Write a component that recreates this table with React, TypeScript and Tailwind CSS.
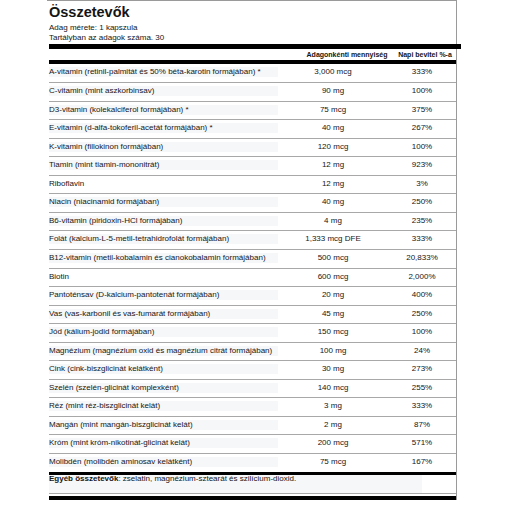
import React from "react";

const rows: [string, string, string][] = [
  ["A-vitamin (retinil-palmitát és 50% béta-karotin formájában) *", "3,000 mcg", "333%"],
  ["C-vitamin (mint aszkorbinsav)", "90 mg", "100%"],
  ["D3-vitamin (kolekalciferol formájában) *", "75 mcg", "375%"],
  ["E-vitamin (d-alfa-tokoferil-acetát formájában) *", "40 mg", "267%"],
  ["K-vitamin (fillokinon formájában)", "120 mcg", "100%"],
  ["Tiamin (mint tiamin-mononitrát)", "12 mg", "923%"],
  ["Riboflavin", "12 mg", "3%"],
  ["Niacin (niacinamid formájában)", "40 mg", "250%"],
  ["B6-vitamin (piridoxin-HCl formájában)", "4 mg", "235%"],
  ["Folát (kalcium-L-5-metil-tetrahidrofolát formájában)", "1,333 mcg DFE", "333%"],
  ["B12-vitamin (metil-kobalamin és cianokobalamin formájában)", "500 mcg", "20,833%"],
  ["Biotin", "600 mcg", "2,000%"],
  ["Pantoténsav (D-kalcium-pantotenát formájában)", "20 mg", "400%"],
  ["Vas (vas-karbonil és vas-fumarát formájában)", "45 mg", "250%"],
  ["Jód (kálium-jodid formájában)", "150 mcg", "100%"],
  ["Magnézium (magnézium oxid és magnézium citrát formájában)", "100 mg", "24%"],
  ["Cink (cink-biszglicinát kelátként)", "30 mg", "273%"],
  ["Szelén (szelén-glicinát komplexként)", "140 mcg", "255%"],
  ["Réz (mint réz-biszglicinát kelát)", "3 mg", "333%"],
  ["Mangán (mint mangán-biszglicinát kelát)", "2 mg", "87%"],
  ["Króm (mint króm-nikotinát-glicinát kelát)", "200 mcg", "571%"],
  ["Molibdén (molibdén aminosav kelátként)", "75 mcg", "167%"],
];

export default function App() {
  return (
    <div className="w-[510px] h-[510px] bg-white text-[#151515] font-['Liberation_Sans',Arial,sans-serif] overflow-hidden">
      <div className="ml-[47px] w-[410px] border-t border-r border-[#9a9a9a] pl-[2px]">
        <div className="text-[14.5px] font-bold leading-[17px] pt-[3px]">Összetevők</div>
        <div className="text-[8px] leading-[9.5px] mt-[2px]">Adag mérete: 1 kapszula</div>
        <div className="text-[8px] leading-[9.5px]">Tartályban az adagok száma. 30</div>
        <div className="h-[5px] bg-black mt-[2px] -mr-[5px]" />
        <div className="flex h-[11px] items-center text-[7px] font-bold leading-[8px]">
          <div className="w-[229px]" />
          <div className="w-[110px] pl-[28px] text-center">Adagonkénti mennyiség</div>
          <div className="flex-1 pl-[6px] text-center">Napi bevitel %-a</div>
        </div>
        <div className="h-[3.5px] bg-black" />
        {rows.map(([label, amount, pct], i) => (
          <div
            key={i}
            className={`flex h-[18.55px] text-[8px] leading-[10px] ${i === 0 ? "" : "border-t border-[#a8a8a8]"}`}
          >
            <div className="w-[229px]">
              <div className={`mt-[3px] h-[10px] whitespace-nowrap ${label === "Riboflavin" || label === "Biotin" ? "" : "bg-[#f6f7f9]"}`}>{label}</div>
            </div>
            <div className="w-[110px] text-center pt-[3px]">{amount}</div>
            <div className="flex-1 text-center pt-[3px]">{pct}</div>
          </div>
        ))}
        <div className="h-[3px] bg-black" />
        <div className="h-[18px]">
          <div className="w-[373px] h-[18px] bg-[#f6f7f9] text-[8px] leading-[8px] pt-[0.5px]">
            <span className="font-bold">Egyéb összetevők</span>: zselatin, magnézium-sztearát és szilícium-dioxid.
          </div>
        </div>
        <div className="border-t border-[#a8a8a8] h-[3px]" />
        <div className="h-[4px] bg-black" />
      </div>
    </div>
  );
}
